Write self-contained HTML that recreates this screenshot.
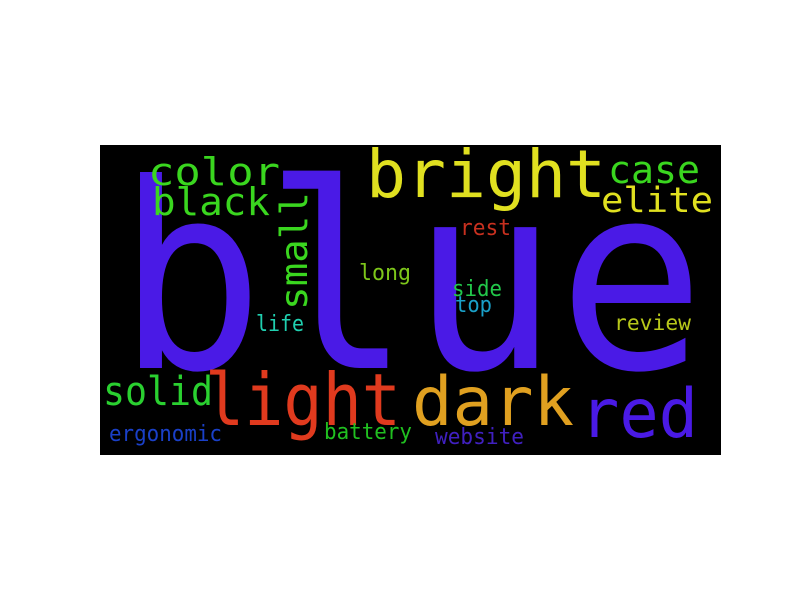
<!DOCTYPE html>
<html><head><meta charset="utf-8"><style>
html,body{margin:0;padding:0;background:#fff;width:800px;height:600px;overflow:hidden}
svg{position:absolute;left:0;top:0}
text{font-family:"DejaVu Sans Mono","Liberation Mono",monospace}
</style></head><body>
<svg width="800" height="600" viewBox="0 0 800 600">
<rect x="100" y="145" width="621" height="310" fill="#000"/>
<text x="117" y="368" font-size="258" fill="#4a1ae6" textLength="588" lengthAdjust="spacingAndGlyphs">blue</text>
<text x="148" y="185" font-size="38" fill="#3ad61f" textLength="132" lengthAdjust="spacingAndGlyphs">color</text>
<text x="152" y="215" font-size="38" fill="#3ad61f" textLength="118" lengthAdjust="spacingAndGlyphs">black</text>
<text x="366" y="197" font-size="66" fill="#e0e020" textLength="240" lengthAdjust="spacingAndGlyphs">bright</text>
<text x="608" y="183" font-size="38" fill="#3ad61f" textLength="92" lengthAdjust="spacingAndGlyphs">case</text>
<text x="601" y="212" font-size="35" fill="#e0e020" textLength="112" lengthAdjust="spacingAndGlyphs">elite</text>
<text transform="translate(307,310) rotate(-90)" font-size="37" fill="#3ad61f" textLength="118" lengthAdjust="spacingAndGlyphs">small</text>
<text x="359" y="280" font-size="22" fill="#7dc61a" textLength="52" lengthAdjust="spacingAndGlyphs">long</text>
<text x="460" y="235" font-size="22" fill="#c8301f" textLength="51" lengthAdjust="spacingAndGlyphs">rest</text>
<text x="452" y="296" font-size="22" fill="#22c84a" textLength="50" lengthAdjust="spacingAndGlyphs">side</text>
<text x="455" y="312" font-size="22" fill="#1aa0c8" textLength="37" lengthAdjust="spacingAndGlyphs">top</text>
<text x="256" y="331" font-size="22" fill="#20d0b0" textLength="48" lengthAdjust="spacingAndGlyphs">life</text>
<text x="614" y="330" font-size="21" fill="#b8c81a" textLength="77" lengthAdjust="spacingAndGlyphs">review</text>
<text x="103" y="405" font-size="40" fill="#2ad030" textLength="110" lengthAdjust="spacingAndGlyphs">solid</text>
<text x="205" y="425" font-size="72" fill="#e03a1e" textLength="196" lengthAdjust="spacingAndGlyphs">light</text>
<text x="412" y="425" font-size="68" fill="#e0a020" textLength="162" lengthAdjust="spacingAndGlyphs">dark</text>
<text x="580" y="437" font-size="68" fill="#4a1ae6" textLength="118" lengthAdjust="spacingAndGlyphs">red</text>
<text x="109" y="441" font-size="22" fill="#1a40c8" textLength="113" lengthAdjust="spacingAndGlyphs">ergonomic</text>
<text x="324" y="439" font-size="22" fill="#20c020" textLength="88" lengthAdjust="spacingAndGlyphs">battery</text>
<text x="435" y="444" font-size="22" fill="#4020c0" textLength="89" lengthAdjust="spacingAndGlyphs">website</text>
</svg>
</body></html>
